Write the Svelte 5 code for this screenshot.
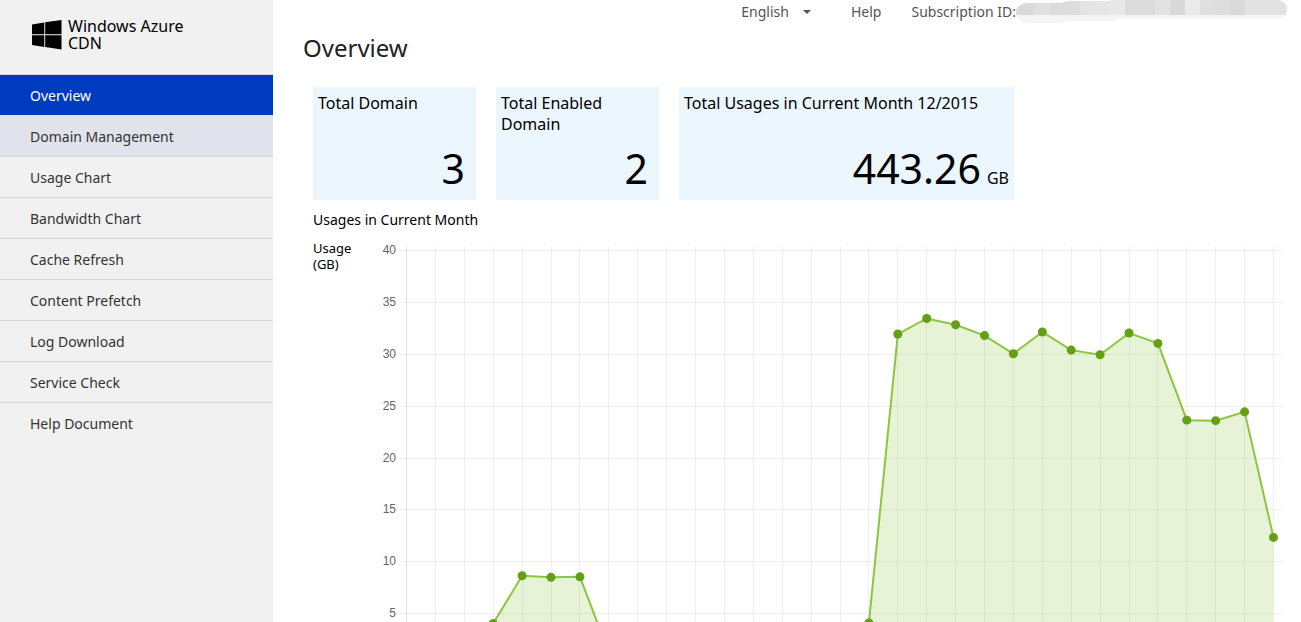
<script>
  const menu = [
    'Overview',
    'Domain Management',
    'Usage Chart',
    'Bandwidth Chart',
    'Cache Refresh',
    'Content Prefetch',
    'Log Download',
    'Service Check',
    'Help Document',
  ];

  // Daily usage in GB, one value for each day of the month
  const usage = [
    0, 0, 0.4, 4, 8.6, 8.45, 8.5, 1.2, 0, 0, 0, 0, 0, 0, 0, 0.1, 4.05, 31.9, 33.4, 32.8,
    31.75, 30, 32.1, 30.35, 29.9, 32, 31, 23.6, 23.55, 24.4, 12.3,
  ];
  const ticks = [40, 35, 30, 25, 20, 15, 10, 5];

  const left = 33;
  const right = 10;
  const top = 10;
  const plotHeight = 415;
  const bottom = top + plotHeight;

  let width = $state(910);
  const step = $derived((width - left - right) / (usage.length - 1));
  const y = (v) => top + ((40 - v) / 40) * plotHeight;
  const crisp = (n) => Math.round(n) + 0.5;
  const points = $derived(usage.map((v, i) => ({ x: left + 0.5 + i * step, y: y(v) })));
  const line = $derived(points.map((p) => `${p.x},${p.y}`).join(' '));

  // Masked ID: [x, width, shade]
  const mask = [
    [0, 19, '#dadada'], [19, 15, '#e0e0e0'], [34, 15, '#dcdcdc'], [49, 15, '#dddddd'],
    [64, 15, '#e4e4e4'], [79, 15, '#e6e6e6'], [94, 15, '#e8e8e8'], [109, 30, '#dcdcdc'],
    [139, 15, '#e2e2e2'], [154, 15, '#d9d9d9'], [169, 15, '#ebebeb'], [184, 15, '#dfdfdf'],
    [199, 15, '#dddddd'], [214, 15, '#dadada'], [229, 43, '#e2e2e2'],
  ];
</script>

<div class="page">
  <aside>
    <a class="brand" href="#home">
      <svg class="logo" viewBox="0 0 30 30" aria-hidden="true">
        <path d="M0 4.5 12.3 2.4V14.2H0zM13.2 2.3 29.5 0V14.2H13.2zM0 15.2H12.3V26.9L0 25.1zM13.2 15.2H29.5V29.4L13.2 27.1z" />
      </svg>
      <span>Windows Azure<br />CDN</span>
    </a>
    <nav>
      {#each menu as item, i}
        <a href="#{item.toLowerCase().replace(' ', '-')}" class:active={i === 0} class:hover={i === 1}>{item}</a>
      {/each}
    </nav>
  </aside>

  <main>
    <header>
      <button type="button">English <i class="caret"></i></button>
      <a href="#help">Help</a>
      <div class="subscription">
        <span>Subscription ID:</span>
        <svg width="272" height="24" aria-hidden="true">
          <clipPath id="blot">
            <path d="M10 3H45L52 1H94V0H263Q271 2 271 9Q271 17 262 19H104L95 21H52L45 23H10Q0 21 0 13Q0 5 10 3z" />
          </clipPath>
          <g clip-path="url(#blot)">
            <rect width="272" height="24" fill="#f5f5f5" />
            {#each mask as [x, w, shade]}
              <rect {x} width={w} height="15" fill={shade} />
            {/each}
          </g>
        </svg>
      </div>
    </header>

    <h1>Overview</h1>

    <div class="content">
      <section class="cards">
        <div class="card">
          <h2>Total Domain</h2>
          <p>3</p>
        </div>
        <div class="card">
          <h2>Total Enabled Domain</h2>
          <p>2</p>
        </div>
        <div class="card wide">
          <h2>Total Usages in Current Month 12/2015</h2>
          <p>443.26<small>GB</small></p>
        </div>
      </section>

      <h3>Usages in Current Month</h3>
      <section class="chart">
        <div class="unit">Usage<br />(GB)</div>
        <div class="plot" bind:clientWidth={width}>
          <svg {width} height={bottom + 10} role="img" aria-label="Usages in Current Month">
            <polygon class="area" points="{left},{bottom} {line} {width - right},{bottom}" />
            {#each ticks as t}
              <line class="grid" x1={left - 5} x2={width} y1={crisp(y(t))} y2={crisp(y(t))} />
              <text x={left - 10} y={Math.round(y(t)) + 4}>{t}</text>
            {/each}
            {#each points as p, i}
              <line class="grid" class:axis={i === 0} x1={crisp(p.x - 0.5)} x2={crisp(p.x - 0.5)} y1={top - 3} y2={bottom} />
            {/each}
            <polyline class="line" points={line} />
            {#each points as p}
              <circle cx={p.x} cy={p.y} r="4.5" />
            {/each}
          </svg>
        </div>
      </section>
    </div>
  </main>
</div>

<style>
  :global(body) {
    margin: 0;
    background: #fff;
  }
  .page {
    display: flex;
    height: 100vh;
    overflow: hidden;
    font-family: 'Noto Sans', 'Open Sans', sans-serif;
    color: #000;
  }
  a {
    color: inherit;
    text-decoration: none;
  }
  aside {
    flex: 0 0 273px;
    background: #f1f1f1;
  }
  .brand {
    display: flex;
    gap: 6px;
    height: 56px;
    padding: 18px 0 0 32px;
    border-bottom: 1px solid #d9d9d9;
    font-size: 16px;
    line-height: 17px;
  }
  .logo {
    width: 30px;
    height: 30px;
    margin-top: 2px;
  }
  nav a {
    display: block;
    padding: 2px 0 0 30px;
    border-bottom: 1px solid #d6d6d6;
    color: #333;
    font-size: 14px;
    line-height: 38px;
  }
  nav a:last-child {
    border-bottom: 0;
  }
  nav .active {
    background: #003bbf;
    border-color: #dfe2eb;
    color: #fff;
  }
  nav .hover {
    background: #e0e3eb;
  }
  main {
    flex: 1;
    min-width: 0;
  }
  header {
    display: flex;
    justify-content: flex-end;
    height: 24px;
    padding-right: 13px;
    color: #555;
    font-size: 14px;
    line-height: 24px;
  }
  header button {
    display: flex;
    align-items: center;
    gap: 14px;
    margin-right: 40px;
    padding: 0;
    border: 0;
    background: none;
    color: inherit;
    font: inherit;
  }
  header > a {
    margin-right: 30px;
  }
  .caret {
    border: 4px solid transparent;
    border-top-color: #555;
    border-bottom: 0;
  }
  .subscription {
    display: flex;
  }
  h1,
  h2,
  h3,
  p {
    margin: 0;
    font-weight: 400;
  }
  h1 {
    padding-left: 30px;
    color: #222;
    font-size: 24px;
    line-height: 48px;
  }
  .content {
    padding: 15px 18px 0 40px;
  }
  .cards {
    display: flex;
    gap: 20px;
  }
  .card {
    display: flex;
    flex-direction: column;
    justify-content: space-between;
    box-sizing: border-box;
    width: 163px;
    height: 113px;
    padding: 6px 5px 4px;
    background: #ebf6ff;
  }
  .wide {
    width: 335px;
  }
  h2 {
    font-size: 16px;
    line-height: 21px;
  }
  p {
    padding-right: 6px;
    font-size: 41px;
    line-height: 56px;
    text-align: right;
  }
  .wide p {
    padding-right: 0;
  }
  small {
    margin-left: 6px;
    font-size: 16px;
    line-height: 16px;
  }
  h3 {
    font-size: 14px;
    line-height: 40px;
  }
  .chart {
    display: flex;
  }
  .unit {
    flex: 0 0 60px;
    font-size: 13px;
    line-height: 16px;
  }
  .plot {
    flex: 1;
    min-width: 0;
  }
  .plot svg {
    display: block;
  }
  .area {
    fill: #8cc63f;
    fill-opacity: 0.21;
  }
  .grid {
    stroke: #000;
    stroke-opacity: 0.06;
  }
  .axis {
    stroke-opacity: 0.12;
  }
  .line {
    fill: none;
    stroke: #8cc63f;
    stroke-width: 2;
  }
  circle {
    fill: #649f16;
  }
  text {
    fill: #666;
    font: 12px 'Liberation Sans', sans-serif;
    text-anchor: end;
  }
</style>
